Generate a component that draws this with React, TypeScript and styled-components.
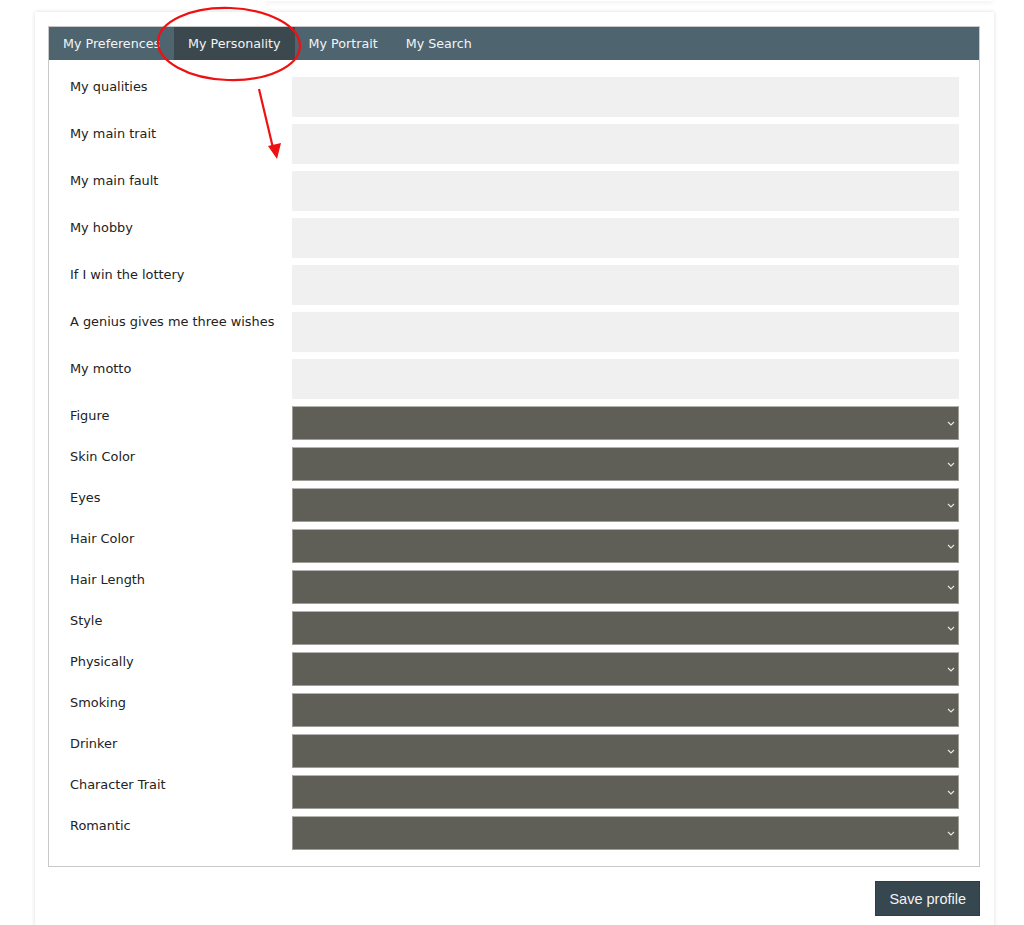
import React from "react";
import styled, { createGlobalStyle } from "styled-components";

const GlobalStyle = createGlobalStyle`
    html, body {
        margin: 0;
        padding: 0;
        background: #ffffff;
    }
    body {
        font-family: "DejaVu Sans", Verdana, sans-serif;
        color: #222;
    }
`;

const Page = styled.div`
    position: relative;
    width: 1024px;
    height: 925px;
    overflow: hidden;
`;

const PrevCard = styled.div`
    margin-left: 265px;
    width: 728px;
    height: 1px;
    background: #fff;
    box-shadow: 0 1px 4px rgba(0, 0, 0, 0.2);
`;

const Card = styled.div`
    margin: 11px 30px 0 35px;
    background: #fff;
    box-shadow: 0 0 4px rgba(0, 0, 0, 0.14);
    padding: 14px 14px 20px 13px;
    min-height: 900px;
`;

const TabBox = styled.div`
    border: 1px solid #c8c8c8;
`;

const TabBar = styled.div`
    display: flex;
    height: 33px;
    background: #4e646f;
`;

const Tab = styled.div<{ $active?: boolean }>`
    display: flex;
    align-items: center;
    padding: 0 14px;
    font-size: 12.7px;
    color: #f2f4f5;
    background: ${(p) => (p.$active ? "#3b494f" : "transparent")};
`;

const Form = styled.div`
    display: flex;
    flex-direction: column;
    gap: 7px;
    padding: 17px 20px 16px 21px;
`;

const Row = styled.div`
    display: grid;
    grid-template-columns: 222px 1fr;
    align-items: start;
`;

const Label = styled.label`
    font-size: 12.9px;
    line-height: 18px;
    padding-top: 1px;
    color: #222;
`;

const TextInput = styled.input`
    display: block;
    box-sizing: border-box;
    width: 100%;
    height: 40px;
    border: none;
    background: #f0f0f0;
    margin: 0;
`;

const SelectWrap = styled.div`
    position: relative;
    height: 34px;
`;

const Select = styled.select`
    display: block;
    box-sizing: border-box;
    width: 100%;
    height: 34px;
    appearance: none;
    border: 1px solid #9e9d98;
    border-top-color: #b5b4b0;
    background: #605f57;
    margin: 0;
`;

const Chevron = styled.svg`
    position: absolute;
    right: 4px;
    top: 15px;
    pointer-events: none;
`;

const Actions = styled.div`
    display: flex;
    justify-content: flex-end;
    margin-top: 14px;
`;

const SaveButton = styled.button`
    font-family: "Liberation Sans", Arial, sans-serif;
    font-size: 14.5px;
    color: #f1f3f4;
    background: #37474f;
    border: 1px solid #2f3c42;
    padding: 0 13px;
    height: 35px;
`;

const Annotation = styled.svg`
    position: absolute;
    left: 0;
    top: 0;
    pointer-events: none;
`;

const textRows = [
    "My qualities",
    "My main trait",
    "My main fault",
    "My hobby",
    "If I win the lottery",
    "A genius gives me three wishes",
    "My motto",
];

const selectRows = [
    "Figure",
    "Skin Color",
    "Eyes",
    "Hair Color",
    "Hair Length",
    "Style",
    "Physically",
    "Smoking",
    "Drinker",
    "Character Trait",
    "Romantic",
];

const tabs = ["My Preferences", "My Personality", "My Portrait", "My Search"];

export default function App() {
    return (
        <Page>
            <GlobalStyle />
            <PrevCard />
            <Card>
                <TabBox>
                    <TabBar>
                        {tabs.map((t) => (
                            <Tab key={t} $active={t === "My Personality"}>
                                {t}
                            </Tab>
                        ))}
                    </TabBar>
                    <Form>
                        {textRows.map((l) => (
                            <Row key={l}>
                                <Label>{l}</Label>
                                <TextInput type="text" />
                            </Row>
                        ))}
                        {selectRows.map((l) => (
                            <Row key={l}>
                                <Label>{l}</Label>
                                <SelectWrap>
                                    <Select defaultValue="">
                                        <option value=""></option>
                                    </Select>
                                    <Chevron width="8" height="5" viewBox="0 0 8 5">
                                        <path d="M1 1 L4 4 L7 1" fill="none" stroke="#e8e8e4" strokeWidth="1.1" />
                                    </Chevron>
                                </SelectWrap>
                            </Row>
                        ))}
                    </Form>
                </TabBox>
                <Actions>
                    <SaveButton>Save profile</SaveButton>
                </Actions>
            </Card>
            <Annotation width="1024" height="925" viewBox="0 0 1024 925">
                <ellipse
                    cx="229"
                    cy="44"
                    rx="71"
                    ry="36"
                    fill="none"
                    stroke="#ee1111"
                    strokeWidth="2.2"
                    transform="rotate(2 229 44)"
                />
                <line x1="259" y1="89" x2="273" y2="148" stroke="#ee1111" strokeWidth="2.2" />
                <polygon points="268,146 281,143 277,159" fill="#ee1111" />
            </Annotation>
        </Page>
    );
}
